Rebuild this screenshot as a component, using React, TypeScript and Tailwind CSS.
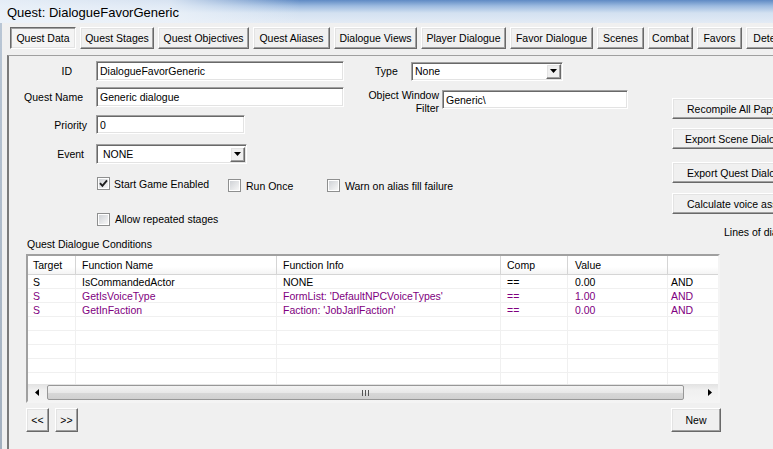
import React from "react";

const sunken =
  "bg-white border border-t-[#a0a0a0] border-l-[#a0a0a0] border-r-white border-b-white shadow-[inset_1px_1px_0_#696969,inset_-1px_-1px_0_#e3e3e3]";
const raised =
  "bg-[#f0f0f0] border border-t-white border-l-white border-r-[#696969] border-b-[#696969] shadow-[inset_-1px_-1px_0_#a0a0a0,inset_1px_1px_0_#e3e3e3]";
const pressed =
  "bg-[#f4f4f4] border border-t-[#696969] border-l-[#696969] border-r-white border-b-white shadow-[inset_1px_1px_0_#a0a0a0,inset_-1px_-1px_0_#e3e3e3]";

const tabs: [string, number][] = [
  ["Quest Data", 66],
  ["Quest Stages", 74],
  ["Quest Objectives", 91],
  ["Quest Aliases", 77],
  ["Dialogue Views", 83],
  ["Player Dialogue", 85],
  ["Favor Dialogue", 83],
  ["Scenes", 47],
  ["Combat", 45],
  ["Favors", 45],
  ["Detection", 59],
];

function DownArrow() {
  return (
    <svg width="7" height="4" viewBox="0 0 7 4">
      <path d="M0 0 H7 L3.5 4 Z" fill="#000" />
    </svg>
  );
}

function Select({ w, text, pl }: { w: string; text: string; pl: string }) {
  return (
    <div className={`${sunken} ${w} h-full flex items-center`}>
      <span className={`flex-1 ${pl} whitespace-nowrap`}>{text}</span>
      <span className={`${raised} w-[15px] h-[15px] mr-[1px] flex items-center justify-center`}>
        <DownArrow />
      </span>
    </div>
  );
}

function Check({ checked }: { checked?: boolean }) {
  return (
    <span className="w-[13px] h-[13px] shrink-0 border border-[#8e8f8f] bg-white p-[1px] flex">
      <span className="flex-1 bg-[linear-gradient(135deg,#cfd2d6,#f7f7f7)] flex items-center justify-center">
        {checked && (
          <svg width="9" height="9" viewBox="0 0 9 9">
            <path d="M1 4.2 L3.4 6.8 L8 1.4" stroke="#1e1e1e" strokeWidth="1.9" fill="none" />
          </svg>
        )}
      </span>
    </span>
  );
}

const cols = [
  { w: "w-[48px]", pl: "pl-[5px]", h: "Target" },
  { w: "w-[201px]", pl: "pl-[6px]", h: "Function Name" },
  { w: "w-[224px]", pl: "pl-[6px]", h: "Function Info" },
  { w: "w-[67px]", pl: "pl-[6px]", h: "Comp" },
  { w: "w-[100px]", pl: "pl-[7px]", h: "Value" },
  { w: "w-[80px]", pl: "pl-[3px]", h: "" },
];

const rows: { c: string; v: string[] }[] = [
  { c: "text-black", v: ["S", "IsCommandedActor", "NONE", "==", "0.00", "AND"] },
  { c: "text-[#800080]", v: ["S", "GetIsVoiceType", "FormList: 'DefaultNPCVoiceTypes'", "==", "1.00", "AND"] },
  { c: "text-[#800080]", v: ["S", "GetInFaction", "Faction: 'JobJarlFaction'", "==", "0.00", "AND"] },
  { c: "text-black", v: ["", "", "", "", "", ""] },
  { c: "text-black", v: ["", "", "", "", "", ""] },
  { c: "text-black", v: ["", "", "", "", "", ""] },
  { c: "text-black", v: ["", "", "", "", "", ""] },
  { c: "text-black", v: ["", "", "", "", "", ""] },
];

function Table() {
  return (
    <div className="mt-[4px] ml-[17px] w-[694px] h-[149px] shrink-0 border-2 border-t-[#a0a0a0] border-l-[#a0a0a0] border-r-[#f4f4f4] border-b-[#f4f4f4] bg-white flex flex-col overflow-hidden">
      <div className="h-[19px] shrink-0 flex border-b border-[#d5d5d5] bg-[linear-gradient(180deg,#ffffff,#ffffff_60%,#f4f4f4)]">
        {cols.map((c, i) => (
          <div
            key={i}
            className={`${c.w} ${c.pl} shrink-0 flex items-center border-r border-[#d5d5d5] whitespace-nowrap`}
          >
            {c.h}
          </div>
        ))}
      </div>
      <div className="flex-1 min-h-0 overflow-hidden">
        {rows.map((r, ri) => (
          <div key={ri} className={`h-[14px] flex border-b border-[#f0f0f0] ${r.c}`}>
            {cols.map((c, i) => (
              <div
                key={i}
                className={`${c.w} ${c.pl} shrink-0 flex items-center border-r border-[#f0f0f0] whitespace-nowrap overflow-hidden`}
              >
                {r.v[i]}
              </div>
            ))}
          </div>
        ))}
      </div>
      <div className="h-[17px] shrink-0 flex bg-[linear-gradient(180deg,#e2e2e2,#f0f0f0_35%,#f4f4f4)]">
        <div className="w-[17px] flex items-center justify-center">
          <svg width="4" height="7" viewBox="0 0 4 7">
            <path d="M4 0 V7 L0 3.5 Z" fill="#000" />
          </svg>
        </div>
        <div className="w-[2px]" />
        <div className="w-[637px] my-[1px] rounded-[2px] border border-[#979797] bg-[linear-gradient(180deg,#f3f3f3,#e8e8e8_50%,#d8d8d8_51%,#d0d0d0)] flex items-center justify-center gap-[2px]">
          <span className="w-[1px] h-[6px] bg-[#555]" />
          <span className="w-[1px] h-[6px] bg-[#555]" />
          <span className="w-[1px] h-[6px] bg-[#555]" />
        </div>
        <div className="w-[17px]" />
        <div className="w-[17px] flex items-center justify-center">
          <svg width="4" height="7" viewBox="0 0 4 7">
            <path d="M0 0 V7 L4 3.5 Z" fill="#000" />
          </svg>
        </div>
      </div>
    </div>
  );
}

export default function App() {
  return (
    <div className="w-[773px] h-[449px] overflow-hidden bg-[#f0f0f0] text-black text-[10.5px] leading-[12px] font-['Liberation_Sans',Arial,sans-serif] flex flex-col">
      <div className="h-[23px] shrink-0 flex items-center pl-[7px] pt-[2px] text-[13px] bg-[linear-gradient(90deg,rgba(236,242,249,0.95)_0px,rgba(236,242,249,0.85)_170px,rgba(236,242,249,0)_300px),linear-gradient(180deg,#5f8ac4_0px,#9dbbe0_6px,#d3e1f1_13px,#e3ebf5_23px)]">
        Quest: DialogueFavorGeneric
      </div>
      <div className="flex flex-1 min-h-0">
        <div className="w-[2px] shrink-0 bg-[linear-gradient(180deg,#b9c6d5,#a3b0bf)]" />
        <div className="flex-1 flex flex-col min-w-0">
          <div className="h-[32px] shrink-0 flex items-start pt-[4px] pl-[8px] gap-[4px]">
            {tabs.map(([t, w], i) => (
              <div
                key={t}
                className={`${i === 0 ? pressed : raised} h-[22px] shrink-0 flex items-center justify-center whitespace-nowrap`}
                style={{ width: w }}
              >
                {t}
              </div>
            ))}
          </div>
          <div className="flex-1 ml-[5px] border-t border-t-[#a0a0a0] border-l-2 border-l-[#7a7a7a] flex flex-col">
            <div className="flex shrink-0">
              <div className="w-[663px] shrink-0 flex flex-col">
                {/* ID row */}
                <div className="mt-[5px] h-[20px] flex items-center">
                  <div className="w-[87px] pr-[24px] text-right">ID</div>
                  <div className={`${sunken} w-[248px] h-full flex items-center pl-[3px]`}>DialogueFavorGeneric</div>
                  <div className="ml-[31px] w-[36px]">Type</div>
                  <div className="h-[19px]">
                    <Select w="w-[152px]" text="None" pl="pl-[3px]" />
                  </div>
                </div>
                {/* Quest name row */}
                <div className="mt-[6px] h-[20px] flex items-start">
                  <div className="w-[87px] pr-[13px] text-right h-full flex items-center justify-end">Quest Name</div>
                  <div className={`${sunken} w-[248px] h-full flex items-center pl-[3px]`}>Generic dialogue</div>
                  <div className="ml-[20px] w-[75px] mt-[2px] text-right leading-[13px]">
                    Object Window
                    <br />
                    Filter
                  </div>
                  <div className={`${sunken} ml-[3px] mt-[3px] w-[186px] h-[19px] flex items-center pl-[3px]`}>Generic\</div>
                </div>
                {/* Priority */}
                <div className="mt-[8px] h-[19px] flex items-center">
                  <div className="w-[87px] pr-[9px] text-right">Priority</div>
                  <div className={`${sunken} w-[149px] h-full flex items-center pl-[3px]`}>0</div>
                </div>
                {/* Event */}
                <div className="mt-[10px] h-[20px] flex items-center">
                  <div className="w-[87px] pr-[12px] text-right">Event</div>
                  <Select w="w-[151px]" text="NONE" pl="pl-[6px]" />
                </div>
                {/* Checkboxes */}
                <div className="mt-[13px] h-[14px] flex items-start pl-[88px]">
                  <div className="w-[131px] flex items-center gap-[4px]">
                    <Check checked />
                    <span>Start Game Enabled</span>
                  </div>
                  <div className="w-[99px] mt-[2px] flex items-center gap-[5px]">
                    <Check />
                    <span>Run Once</span>
                  </div>
                  <div className="mt-[2px] flex items-center gap-[5px] whitespace-nowrap">
                    <Check />
                    <span>Warn on alias fill failure</span>
                  </div>
                </div>
                <div className="mt-[21px] h-[14px] flex items-center pl-[88px] gap-[5px]">
                  <Check />
                  <span>Allow repeated stages</span>
                </div>
                <div className="mt-[12px] h-[12px] pl-[18px] whitespace-nowrap">Quest Dialogue Conditions</div>
              </div>
              <div className="flex flex-col pt-[42px] shrink-0">
                <div className={`${raised} w-[130px] h-[21px] flex items-center pl-[14px] whitespace-nowrap`}>Recompile All Papyrus Scripts</div>
                <div className={`${raised} mt-[9px] w-[130px] h-[21px] flex items-center pl-[12px] whitespace-nowrap`}>Export Scene Dialogue</div>
                <div className={`${raised} mt-[13px] w-[130px] h-[21px] flex items-center pl-[14px] whitespace-nowrap`}>Export Quest Dialogue</div>
                <div className={`${raised} mt-[10px] w-[130px] h-[21px] flex items-center pl-[14px] whitespace-nowrap`}>Calculate voice assets</div>
                <div className="mt-[12px] h-[12px] pl-[52px] whitespace-nowrap">Lines of dialogue:</div>
              </div>
            </div>
            <Table />
            <div className="mt-[5px] ml-[17px] w-[695px] flex justify-between shrink-0">
              <div className="flex gap-[6px]">
                <div className={`${raised} w-[23px] h-[24px] flex items-center justify-center`}>&lt;&lt;</div>
                <div className={`${raised} w-[23px] h-[24px] flex items-center justify-center`}>&gt;&gt;</div>
              </div>
              <div className={`${raised} w-[50px] h-[24px] flex items-center justify-center`}>New</div>
            </div>
          </div>
        </div>
      </div>
    </div>
  );
}
